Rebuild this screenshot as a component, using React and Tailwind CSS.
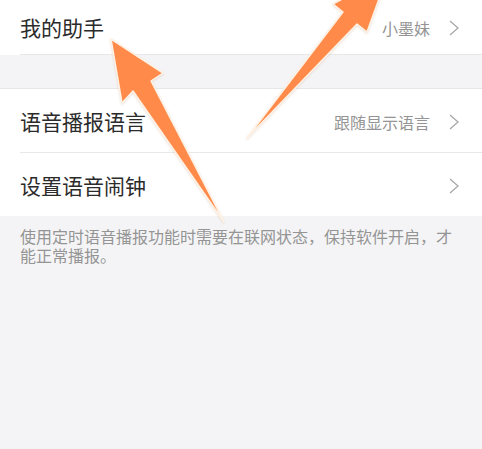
import React from 'react';

const font = { fontFamily: '"Noto Sans CJK SC", "Noto Sans", sans-serif' };

function Chevron() {
  return (
    <svg width="12" height="18" viewBox="0 0 12 18" className="ml-[18px]">
      <path d="M2 2 L10 9 L2 16" fill="none" stroke="#a8a8a8" strokeWidth="1.3" />
    </svg>
  );
}

function Row({ label, value, height, divider }) {
  return (
    <div className="bg-white pl-5">
      <div
        className={`flex items-center pt-[2px] pr-[22px] ${divider ? 'border-b border-[#e8e8e8]' : ''}`}
        style={{ height }}
      >
        <span className="flex-1 text-[21px] text-[#2b2b2b]">{label}</span>
        {value && <span className="text-[16px] text-[#949494]">{value}</span>}
        <Chevron />
      </div>
    </div>
  );
}

export default function App() {
  return (
    <div className="relative w-[482px] h-[449px] overflow-hidden bg-[#f4f4f6]" style={font}>
      <Row label="我的助手" value="小墨妹" height={55} divider />
      <div className="h-[34px] border-b border-[#e6e6e6]" />
      <Row label="语音播报语言" value="跟随显示语言" height={64} divider />
      <Row label="设置语音闹钟" height={63} />
      <p className="px-5 pt-[11px] text-[16px] leading-[19px] text-[#949494]">
        使用定时语音播报功能时需要在联网状态，保持软件开启，才能正常播报。
      </p>

      <svg className="absolute left-0 top-0 pointer-events-none" width="482" height="449" viewBox="0 0 482 449">
        <defs>
          <filter id="sh" x="-20%" y="-20%" width="140%" height="140%">
            <feDropShadow dx="0" dy="1" stdDeviation="1" floodColor="#c8a080" floodOpacity="0.35" />
          </filter>
        </defs>
        <g fill="#ff8a48" stroke="#fff1e4" strokeWidth="1.5" strokeLinejoin="round" filter="url(#sh)">
          <polygon points="111,39 163,73 151,81 224,222 133,91 122,103" />
          <polygon points="388,-26 367,32 357,24 247,138 343,12 333,4" />
        </g>
      </svg>
    </div>
  );
}
